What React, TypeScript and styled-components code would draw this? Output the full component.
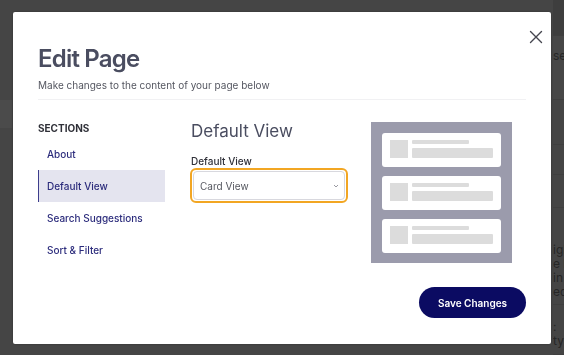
import React from 'react';
import styled, { createGlobalStyle } from 'styled-components';

const GlobalStyle = createGlobalStyle`
  html, body {
    margin: 0;
    padding: 0;
    width: 564px;
    height: 355px;
    overflow: hidden;
    background: #454545;
    font-family: Inter, "Noto Sans", sans-serif;
  }
  * { box-sizing: border-box; }
`;

// page behind the overlay (dimmed)
const Page = styled.div`
  display: grid;
  grid-template-columns: 553px 1fr;
  height: 355px;
`;

const PageMain = styled.div`
  display: flex;
  flex-direction: column;
  padding-top: 100px;
`;

const PageBand = styled.div`
  height: 28px;
  width: 12px;
  background: #4b4b4b;
`;

const PageSide = styled.div`
  display: flex;
  flex-direction: column;
  overflow: hidden;
  white-space: nowrap;
  color: #262626;
  font-size: 12px;
  line-height: 14px;
`;

const SideBlock = styled.div<{ $h: number; $pt?: number; $bg?: string }>`
  height: ${p => p.$h}px;
  flex-shrink: 0;
  background: ${p => p.$bg || 'transparent'};
  border-bottom: 1px solid #3f3f3f;
  padding-top: ${p => p.$pt || 0}px;
`;

const Overlay = styled.div`
  position: fixed;
  inset: 0;
  display: flex;
  align-items: flex-start;
  padding: 12px 0 0 13px;
`;

const Modal = styled.div`
  position: relative;
  width: 538px;
  height: 332px;
  background: #fff;
  border-radius: 2px;
  box-shadow: 0 0 2px rgba(0, 0, 0, 0.35);
  padding: 31px 25px 26px 25px;
  display: flex;
  flex-direction: column;
`;

const CloseButton = styled.button`
  position: absolute;
  top: 18px;
  right: 8px;
  width: 14px;
  height: 14px;
  padding: 0;
  border: none;
  background: none;
  cursor: pointer;
  display: flex;
`;

const Title = styled.h1`
  margin: 0;
  font-size: 24px;
  line-height: 31px;
  font-weight: 600;
  letter-spacing: -0.8px;
  color: #4a4d60;
`;

const Subtitle = styled.p`
  margin: 4px 0 0;
  font-size: 10px;
  line-height: 14px;
  color: #555761;
`;

const Divider = styled.hr`
  margin: 7px 0 0;
  width: 488px;
  border: none;
  border-top: 1px solid #f1f1f3;
`;

const Body = styled.div`
  display: grid;
  grid-template-columns: 127px 158px 141px;
  column-gap: 26px;
  margin-top: 20px;
  & > :last-child {
    margin-left: -4px;
  }
`;

const Nav = styled.nav`
  display: flex;
  flex-direction: column;
  padding-top: 1px;
`;

const NavHeading = styled.div`
  font-size: 10px;
  line-height: 14px;
  font-weight: 700;
  color: #2f3038;
  margin-bottom: 3px;
`;

const NavItem = styled.div<{ $active?: boolean }>`
  height: 32px;
  display: flex;
  align-items: center;
  padding-left: ${p => (p.$active ? 8 : 9)}px;
  font-size: 10px;
  font-weight: 500;
  color: #2c2c7c;
  background: ${p => (p.$active ? '#e4e4ef' : 'transparent')};
  border-left: ${p => (p.$active ? '1px solid #3d3d8c' : 'none')};
`;

const Main = styled.div`
  display: flex;
  flex-direction: column;
`;

const SectionTitle = styled.h2`
  margin: 0;
  font-size: 17px;
  line-height: 22px;
  font-weight: 400;
  color: #4a4d60;
`;

const FieldLabel = styled.label`
  margin-top: 12px;
  font-size: 10px;
  line-height: 14px;
  font-weight: 500;
  color: #2f3038;
`;

const SelectRing = styled.div`
  margin-left: -1px;
  padding: 1px;
  border: 2px solid #f2a623;
  border-radius: 6px;
  width: 158px;
  height: 35px;
`;

const SelectBox = styled.div`
  height: 100%;
  border: 1px solid #d8d8de;
  border-radius: 4px;
  display: flex;
  align-items: center;
  justify-content: space-between;
  padding: 0 4px 0 6px;
  font-size: 10px;
  color: #55575f;
`;

const Preview = styled.div`
  width: 141px;
  height: 141px;
  margin-top: 2px;
  background: #9b9bac;
  padding: 11px 11px 0 11px;
  display: flex;
  flex-direction: column;
  gap: 9px;
`;

const PreviewCard = styled.div`
  height: 34px;
  background: #fff;
  border-radius: 3px;
  display: flex;
  padding: 7px 8px 0 8px;
  gap: 4px;
`;

const Thumb = styled.div`
  width: 19px;
  height: 18px;
  background: #dcdcdc;
`;

const Lines = styled.div`
  display: flex;
  flex-direction: column;
  gap: 4px;
  flex: 1;
`;

const Line = styled.div<{ $w: number; $h: number }>`
  width: ${p => p.$w}px;
  height: ${p => p.$h}px;
  background: #dcdcdc;
  border-radius: 1px;
`;

const Footer = styled.div`
  margin-top: auto;
  display: flex;
  justify-content: flex-end;
`;

const SaveButton = styled.button`
  width: 107px;
  height: 31px;
  border: none;
  border-radius: 16px;
  background: #0b0b62;
  color: #fff;
  font-family: Inter, "Noto Sans", sans-serif;
  font-size: 10px;
  font-weight: 600;
  cursor: pointer;
`;

const sections = ['About', 'Default View', 'Search Suggestions', 'Sort & Filter'];

export default function App() {
  return (
    <>
      <GlobalStyle />
      <Page>
        <PageMain>
          <PageBand />
        </PageMain>
        <PageSide>
          <SideBlock $h={36} $bg="#3e3e3e" />
          <SideBlock $h={64} $pt={13} $bg="#474747">se</SideBlock>
          <SideBlock $h={45} />
          <SideBlock $h={30} />
          <SideBlock $h={33} />
          <SideBlock $h={97} $pt={35}>
            <div>igh</div>
            <div>e b</div>
            <div>in</div>
            <div>ed</div>
          </SideBlock>
          <SideBlock $h={50} $pt={15}>
            <div>:</div>
            <div>ty</div>
          </SideBlock>
        </PageSide>
      </Page>
      <Overlay>
        <Modal>
          <CloseButton aria-label="Close">
            <svg width="14" height="14" viewBox="0 0 14 14">
              <path d="M1.5 1.5 L12.5 12.5 M12.5 1.5 L1.5 12.5" stroke="#45464f" strokeWidth="1.4" strokeLinecap="round" />
            </svg>
          </CloseButton>
          <Title>Edit Page</Title>
          <Subtitle>Make changes to the content of your page below</Subtitle>
          <Divider />
          <Body>
            <Nav>
              <NavHeading>SECTIONS</NavHeading>
              {sections.map(s => (
                <NavItem key={s} $active={s === 'Default View'}>{s}</NavItem>
              ))}
            </Nav>
            <Main>
              <SectionTitle>Default View</SectionTitle>
              <FieldLabel>Default View</FieldLabel>
              <SelectRing>
                <SelectBox>
                  <span>Card View</span>
                  <svg width="8" height="8" viewBox="0 0 8 8">
                    <path d="M2 3 L4 5 L6 3" stroke="#9a9aa2" strokeWidth="1" fill="none" />
                  </svg>
                </SelectBox>
              </SelectRing>
            </Main>
            <Preview>
              {[0, 1, 2].map(i => (
                <PreviewCard key={i}>
                  <Thumb />
                  <Lines>
                    <Line $w={57} $h={4} />
                    <Line $w={81} $h={10} />
                  </Lines>
                </PreviewCard>
              ))}
            </Preview>
          </Body>
          <Footer>
            <SaveButton>Save Changes</SaveButton>
          </Footer>
        </Modal>
      </Overlay>
    </>
  );
}
